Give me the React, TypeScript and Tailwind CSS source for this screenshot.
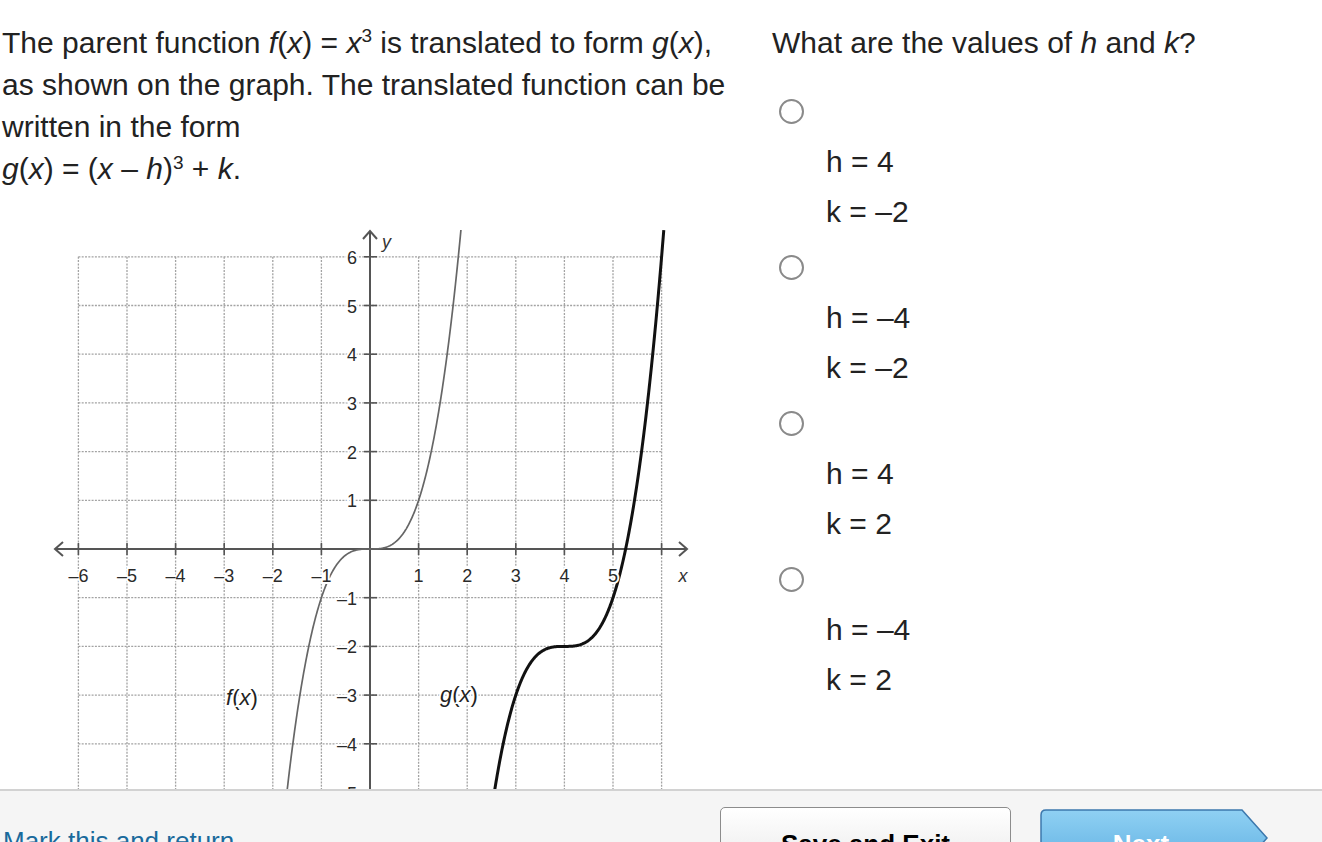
import React from 'react';

const U_X = 48.6;
const U_Y = 48.7;
const OX = 370;
const OY = 329;
const X = (x: number) => OX + x * U_X;
const Y = (y: number) => OY - y * U_Y;

function curve(fn: (x: number) => number, from: number, to: number) {
  const pts: string[] = [];
  const steps = 300;
  for (let i = 0; i <= steps; i++) {
    const x = from + ((to - from) * i) / steps;
    pts.push(`${X(x).toFixed(2)},${Y(fn(x)).toFixed(2)}`);
  }
  return 'M' + pts.join(' L');
}

const halo = { stroke: '#fff', strokeWidth: 4, paintOrder: 'stroke' as const };

function Graph() {
  const xs = [-6, -5, -4, -3, -2, -1, 1, 2, 3, 4, 5, 6];
  const ys = [-5, -4, -3, -2, -1, 1, 2, 3, 4, 5, 6];
  const top = 6.55;
  const fTop = Math.cbrt(top);
  const gTop = 4 + Math.cbrt(top + 2);
  return (
    <svg width="700" height="570" className="mt-[30px] block" fontFamily="'Liberation Sans', Arial, sans-serif">
      {/* grid */}
      {xs.map((x) => (
        <line key={'gx' + x} x1={X(x)} x2={X(x)} y1={Y(6)} y2={570} stroke="#a3a3a3" strokeWidth="1.3" strokeDasharray="2 1.3" />
      ))}
      {ys.map((y) => (
        <line key={'gy' + y} x1={X(-6)} x2={X(6)} y1={Y(y)} y2={Y(y)} stroke="#a3a3a3" strokeWidth="1.3" strokeDasharray="2 1.3" />
      ))}

      {/* axes */}
      <line x1={55} x2={687} y1={OY} y2={OY} stroke="#555" strokeWidth="2" />
      <line x1={OX} x2={OX} y1={11} y2={570} stroke="#555" strokeWidth="2" />
      <path d={`M63,${OY - 7} L55,${OY} L63,${OY + 7}`} fill="none" stroke="#555" strokeWidth="2" />
      <path d={`M679,${OY - 7} L687,${OY} L679,${OY + 7}`} fill="none" stroke="#555" strokeWidth="2" />
      <path d={`M${OX - 7},19 L${OX},11 L${OX + 7},19`} fill="none" stroke="#555" strokeWidth="2" />

      {/* ticks */}
      {xs.map((x) => (
        <line key={'tx' + x} x1={X(x)} x2={X(x)} y1={OY - 6} y2={OY + 6} stroke="#555" strokeWidth="1.6" />
      ))}
      {ys.map((y) => (
        <line key={'ty' + y} x1={OX - 6} x2={OX + 7} y1={Y(y)} y2={Y(y)} stroke="#555" strokeWidth="1.6" />
      ))}

      {/* curves */}
      <path d={curve((x) => x * x * x, -1.85, fTop)} fill="none" stroke="#666" strokeWidth="1.7" />
      <path d={curve((x) => Math.pow(x - 4, 3) - 2, 2.45, gTop)} fill="none" stroke="#111" strokeWidth="3" strokeLinejoin="round" />

      {/* tick labels */}
      {xs.filter((x) => x !== 6).map((x) => (
        <text key={'lx' + x} x={X(x)} y={362} fontSize="18" fill="#2a2a2a" textAnchor="middle" {...halo}>
          {x < 0 ? '\u2013' + Math.abs(x) : x}
        </text>
      ))}
      {ys.map((y) => (
        <text key={'ly' + y} x={357} y={Y(y) + 7} fontSize="18" fill="#2a2a2a" textAnchor="end" {...halo}>
          {y < 0 ? '\u2013' + Math.abs(y) : y}
        </text>
      ))}
      <text x={683} y={362} fontSize="18" fill="#333" fontStyle="italic" textAnchor="middle">x</text>
      <text x={382} y={28} fontSize="18" fill="#333" fontStyle="italic">y</text>

      {/* function labels */}
      <text x={226} y={485} fontSize="22" fill="#222" {...halo}>
        <tspan fontStyle="italic">f</tspan>(<tspan fontStyle="italic">x</tspan>)
      </text>
      <text x={440} y={482} fontSize="22" fill="#222" {...halo}>
        <tspan fontStyle="italic">g</tspan>(<tspan fontStyle="italic">x</tspan>)
      </text>
    </svg>
  );
}

const options = [
  { h: '4', k: '\u20132' },
  { h: '\u20134', k: '\u20132' },
  { h: '4', k: '2' },
  { h: '\u20134', k: '2' },
];

export default function App() {
  return (
    <div className="flex h-screen flex-col overflow-hidden bg-white font-['Liberation_Sans',Arial,sans-serif] text-[#222]">
      <main className="flex h-[789px] shrink-0 overflow-hidden">
        <div className="w-[772px] shrink-0">
          <p className="whitespace-nowrap pl-[2px] pt-[22px] text-[30px] leading-[42px]">
            The parent function <i>f</i>(<i>x</i>) = <i>x</i>
            <span className="relative -top-[11px] text-[19px] leading-none">3</span> is translated to form <i>g</i>(<i>x</i>),
            <br />
            as shown on the graph. The translated function can be
            <br />
            written in the form
            <br />
            <i>g</i>(<i>x</i>) = (<i>x</i> – <i>h</i>)
            <span className="relative -top-[10px] text-[19px] leading-none">3</span> + <i>k</i>.
          </p>
          <Graph />
        </div>
        <div className="pt-[22px]">
          <p className="whitespace-nowrap text-[30px] leading-[42px]">
            What are the values of <i>h</i> and <i>k</i>?
          </p>
          <div className="mt-[35px]">
            {options.map((o, i) => (
              <div key={i} className="flex flex-col pb-[18px]">
                <div className="ml-[7px] h-[25px] w-[25px] rounded-full border-2 border-[#8a8a8a] bg-white" />
                <div className="ml-[54px] mt-[13px] text-[30px] leading-[50px]">
                  <div>h = {o.h}</div>
                  <div>k = {o.k}</div>
                </div>
              </div>
            ))}
          </div>
        </div>
      </main>

      <footer className="flex flex-1 items-start border-t-2 border-[#d2d2d2] bg-[#f5f5f5] pt-[16px]">
        <div className="mt-[19px] w-[720px] shrink-0 pl-[3px] text-[26px] leading-[30px] text-[#1a6a9c]">
          Mark this and return
        </div>
        <button className="h-[62px] w-[291px] shrink-0 rounded-[5px] border-[1.5px] border-[#8c8c8c] bg-linear-to-b from-white to-[#ebebeb] pt-[1px] text-center text-[26px] font-bold leading-[30px] text-black">
          <span className="block pt-[11px]">Save and Exit</span>
        </button>
        <button className="relative ml-[29px] mt-[2px] h-[58px] w-[229px] shrink-0">
          <svg className="absolute inset-0" width="229" height="58" viewBox="0 0 229 58">
            <defs>
              <linearGradient id="nextFill" x1="0" y1="0" x2="0" y2="1">
                <stop offset="0" stopColor="#8fd0f3" />
                <stop offset="1" stopColor="#62b2e3" />
              </linearGradient>
            </defs>
            <path
              d="M1,6 Q1,1 6,1 L202,1 L227,29 L202,57 L6,57 Q1,57 1,52 Z"
              fill="url(#nextFill)"
              stroke="#3c78ad"
              strokeWidth="1.5"
            />
          </svg>
          <span className="relative block w-[202px] pt-[12px] text-center text-[26px] font-bold leading-[30px] text-white">
            Next
          </span>
        </button>
      </footer>
    </div>
  );
}
